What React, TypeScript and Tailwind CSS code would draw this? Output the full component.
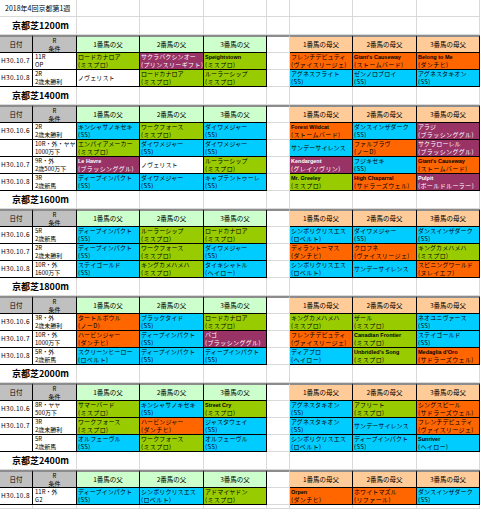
import React from 'react';

// cell colour keys: L lime, C cyan, O orange, P purple, W white
type Horse = { n: string; s?: string; c: 'L' | 'C' | 'O' | 'P' | 'W' };
type Race = { d: string; r1: string; r2: string; h: Horse[] };
type Section = { title: string; races: Race[] };

const bg: Record<Horse['c'], string> = {
  L: 'bg-[#99cc00] text-black',
  C: 'bg-[#00ccff] text-black',
  O: 'bg-[#ff6600] text-black',
  P: 'bg-[#993366] text-white',
  W: 'bg-white text-black',
};

const h = (n: string, s: string | undefined, c: Horse['c']): Horse => ({ n, s, c });

const sections: Section[] = [
  {
    title: '京都芝1200m',
    races: [
      {
        d: 'H30.10.7', r1: '11R', r2: 'OP',
        h: [
          h('ロードカナロア', '(ミスプロ)', 'L'),
          h('サクラバクシンオー', '(プリンスリーギフト)', 'P'),
          h('Speightstown', '(ミスプロ)', 'L'),
          h('フレンチデピュティ', '(ヴァイスリージェ)', 'O'),
          h("Giant's Causeway", '(ストームバード)', 'O'),
          h('Belong to Me', '(ダンチヒ)', 'O'),
        ],
      },
      {
        d: 'H30.10.8', r1: '2R', r2: '2歳未勝利',
        h: [
          h('ノヴェリスト', undefined, 'W'),
          h('ロードカナロア', '(ミスプロ)', 'L'),
          h('ルーラーシップ', '(ミスプロ)', 'L'),
          h('アグネスフライト', '(SS)', 'C'),
          h('ゼンノロブロイ', '(SS)', 'C'),
          h('アグネスタキオン', '(SS)', 'C'),
        ],
      },
    ],
  },
  {
    title: '京都芝1400m',
    races: [
      {
        d: 'H30.10.6', r1: '2R', r2: '2歳未勝利',
        h: [
          h('キンシャサノキセキ', '(SS)', 'C'),
          h('ワークフォース', '(ミスプロ)', 'L'),
          h('ダイワメジャー', '(SS)', 'C'),
          h('Forest Wildcat', '(ストームバード)', 'O'),
          h('ダンスインザダーク', '(SS)', 'C'),
          h('アラジ', '(ブラッシンググル)', 'P'),
        ],
      },
      {
        d: '', r1: '10R・外・ヤヤ', r2: '1000万下',
        h: [
          h('エンパイアメーカー', '(ミスプロ)', 'L'),
          h('ダイワメジャー', '(SS)', 'C'),
          h('ダイワメジャー', '(SS)', 'C'),
          h('サンデーサイレンス', undefined, 'C'),
          h('ファルブラヴ', '(ノーD)', 'O'),
          h('サクラローレル', '(ブラッシンググル)', 'P'),
        ],
      },
      {
        d: 'H30.10.7', r1: '9R・外', r2: '2歳500万下',
        h: [
          h('Le Havre', '(ブラッシンググル)', 'P'),
          h('ノヴェリスト', undefined, 'W'),
          h('ルーラーシップ', '(ミスプロ)', 'L'),
          h('Kendargent', '(グレイソヴリン)', 'P'),
          h('フジキセキ', '(SS)', 'C'),
          h("Giant's Causeway", '(ストームバード)', 'O'),
        ],
      },
      {
        d: 'H30.10.8', r1: '3R', r2: '2歳新馬',
        h: [
          h('ディープインパクト', '(SS)', 'C'),
          h('ダイワメジャー', '(SS)', 'C'),
          h('キャプテントゥーレ', '(SS)', 'C'),
          h('Mr. Greeley', '(ミスプロ)', 'L'),
          h('High Chaparral', '(サドラーズウェル)', 'O'),
          h('Pulpit', '(ボールドルーラー)', 'P'),
        ],
      },
    ],
  },
  {
    title: '京都芝1600m',
    races: [
      {
        d: 'H30.10.6', r1: '5R', r2: '2歳新馬',
        h: [
          h('ディープインパクト', '(SS)', 'C'),
          h('ルーラーシップ', '(ミスプロ)', 'L'),
          h('ロードカナロア', '(ミスプロ)', 'L'),
          h('シンボリクリスエス', '(ロベルト)', 'C'),
          h('ダイワメジャー', '(SS)', 'C'),
          h('ダンスインザダーク', '(SS)', 'C'),
        ],
      },
      {
        d: 'H30.10.7', r1: '2R', r2: '2歳未勝利',
        h: [
          h('ディープインパクト', '(SS)', 'C'),
          h('ワークフォース', '(ミスプロ)', 'L'),
          h('ダイワメジャー', '(SS)', 'C'),
          h('ディラントーマス', '(ダンチヒ)', 'O'),
          h('クロフネ', '(ヴァイスリージェ)', 'O'),
          h('キングカメハメハ', '(ミスプロ)', 'L'),
        ],
      },
      {
        d: 'H30.10.8', r1: '10R・外', r2: '1600万下',
        h: [
          h('ステイゴールド', '(SS)', 'C'),
          h('キングカメハメハ', '(ミスプロ)', 'L'),
          h('タイキシャトル', '(ヘイロー)', 'C'),
          h('シンボリクリスエス', '(ロベルト)', 'C'),
          h('サンデーサイレンス', undefined, 'C'),
          h('スピニングワールド', '(ヌレイエフ)', 'O'),
        ],
      },
    ],
  },
  {
    title: '京都芝1800m',
    races: [
      {
        d: 'H30.10.6', r1: '3R・外', r2: '2歳未勝利',
        h: [
          h('タートルボウル', '(ノーD)', 'O'),
          h('ブラックタイド', '(SS)', 'C'),
          h('ロードカナロア', '(ミスプロ)', 'L'),
          h('キングカメハメハ', '(ミスプロ)', 'L'),
          h('ザール', '(ミスプロ)', 'L'),
          h('ネオユニヴァース', '(SS)', 'C'),
        ],
      },
      {
        d: 'H30.10.7', r1: '10R・外', r2: '1000万下',
        h: [
          h('ハービンジャー', '(ダンチヒ)', 'O'),
          h('ディープインパクト', '(SS)', 'C'),
          h('バゴ', '(ブラッシンググル)', 'P'),
          h('フレンチデピュティ', '(ヴァイスリージェ)', 'O'),
          h('Canadian Frontier', '(ミスプロ)', 'L'),
          h('ステイゴールド', '(SS)', 'C'),
        ],
      },
      {
        d: 'H30.10.8', r1: '5R・外', r2: '2歳新馬',
        h: [
          h('スクリーンヒーロー', '(ロベルト)', 'C'),
          h('ディープインパクト', '(SS)', 'C'),
          h('ディープインパクト', '(SS)', 'C'),
          h('ディアブロ', '(ヘイロー)', 'C'),
          h("Unbridled's Song", '(ミスプロ)', 'L'),
          h("Medaglia d'Oro", '(サドラーズウェル)', 'O'),
        ],
      },
    ],
  },
  {
    title: '京都芝2000m',
    races: [
      {
        d: 'H30.10.6', r1: '8R・ヤヤ', r2: '500万下',
        h: [
          h('サマーバード', '(ミスプロ)', 'L'),
          h('キンシャサノキセキ', '(SS)', 'C'),
          h('Street Cry', '(ミスプロ)', 'L'),
          h('アグネスタキオン', '(SS)', 'C'),
          h('アフリート', '(ミスプロ)', 'L'),
          h('シングスピール', '(サドラーズウェル)', 'O'),
        ],
      },
      {
        d: 'H30.10.7', r1: '3R', r2: '2歳未勝利',
        h: [
          h('ワークフォース', '(ミスプロ)', 'L'),
          h('ハービンジャー', '(ダンチヒ)', 'O'),
          h('ジャスタウェイ', '(SS)', 'C'),
          h('アグネスタキオン', '(SS)', 'C'),
          h('サンデーサイレンス', undefined, 'C'),
          h('フレンチデピュティ', '(ヴァイスリージェ)', 'O'),
        ],
      },
      {
        d: '', r1: '5R', r2: '2歳新馬',
        h: [
          h('オルフェーヴル', '(SS)', 'C'),
          h('ワークフォース', '(ミスプロ)', 'L'),
          h('オルフェーヴル', '(SS)', 'C'),
          h('シンボリクリスエス', '(ロベルト)', 'C'),
          h('ディープインパクト', '(SS)', 'C'),
          h('Sunriver', '(ヘイロー)', 'C'),
        ],
      },
    ],
  },
  {
    title: '京都芝2400m',
    races: [
      {
        d: 'H30.10.8', r1: '11R・外', r2: 'G2',
        h: [
          h('ディープインパクト', '(SS)', 'C'),
          h('シンボリクリスエス', '(ロベルト)', 'C'),
          h('アドマイヤドン', '(ミスプロ)', 'L'),
          h('Orpen', '(ダンチヒ)', 'O'),
          h('ホワイトマズル', '(リファール)', 'O'),
          h('ダンスインザダーク', '(SS)', 'C'),
        ],
      },
    ],
  },
];

const cols = 'grid grid-cols-[33px_44px_63px_64px_63px_23px_63px_64px_63px]';
const grid = 'border-r border-b border-[#d9d9d9]';
const line = 'border-r border-b border-black';

function HorseCell({ x }: { x: Horse }) {
  const latin = /^[A-Za-z]/.test(x.n);
  return (
    <div className={`${line} ${bg[x.c]} overflow-hidden whitespace-nowrap pl-[1px] flex flex-col ${x.s ? '' : 'justify-center'}`}>
      <div className={latin ? "text-[5.5px] leading-[8px] font-bold font-['Liberation_Sans']" : 'text-[6px] leading-[8px] tracking-[0.1px]'}>{x.n}</div>
      {x.s && <div className="text-[6px] leading-[8px] tracking-[0.4px]">{x.s}</div>}
    </div>
  );
}

function EmptyCells({ n }: { n: number }) {
  return (
    <>
      {Array.from({ length: n }).map((_, i) => (
        <div key={i} className={grid} />
      ))}
    </>
  );
}

function Header() {
  const top = 'border-t-2 border-t-[#8c8c8c]';
  const fathers = ['1番馬の父', '2番馬の父', '3番馬の父'];
  const mothers = ['1番馬の母父', '2番馬の母父', '3番馬の母父'];
  return (
    <div className={`${cols} h-[18px] text-[6.5px]`}>
      <div className={`${line} ${top} bg-[#c0c0c0] flex items-center justify-center`}>日付</div>
      <div className={`${line} ${top} bg-[#c0c0c0] flex flex-col items-center justify-start text-[6px] leading-[7.5px]`}>
        <span>R</span>
        <span>条件</span>
      </div>
      {fathers.map((t) => (
        <div key={t} className={`${line} ${top} bg-[#ccffcc] flex items-center justify-center`}>{t}</div>
      ))}
      <div className={`${grid} ${top}`} />
      {mothers.map((t) => (
        <div key={t} className={`${line} ${top} bg-[#ffcc99] flex items-center justify-center`}>{t}</div>
      ))}
    </div>
  );
}

function RaceRow({ race }: { race: Race }) {
  return (
    <div className={`${cols} h-[17px]`}>
      <div className={`${line} bg-white flex items-center pl-[1px] text-[6.5px] tracking-[0.3px]`}>{race.d}</div>
      <div className={`${line} bg-white flex flex-col pl-[2px] text-[6px] leading-[8px] whitespace-nowrap overflow-hidden`}>
        <span>{race.r1}</span>
        <span>{race.r2}</span>
      </div>
      {race.h.slice(0, 3).map((x, i) => (
        <HorseCell key={i} x={x} />
      ))}
      <div className={grid} />
      {race.h.slice(3).map((x, i) => (
        <HorseCell key={i} x={x} />
      ))}
    </div>
  );
}

export default function App() {
  return (
    <div className="w-[480px] h-[509px] overflow-hidden bg-white text-black font-['Noto_Sans_CJK_JP',sans-serif]">
      {/* title row */}
      <div className={`${cols} h-[17px]`}>
        <div className={`${grid} col-span-2 flex items-center pl-[5px] text-[7px] whitespace-nowrap`}>2018年4回京都第1週</div>
        <EmptyCells n={7} />
      </div>

      {sections.map((sec) => (
        <div key={sec.title}>
          <div className={`${cols} h-[18px]`}>
            <div className={`${grid} col-span-2 flex items-center pl-[12px] text-[9px] font-bold whitespace-nowrap`}>{sec.title}</div>
            <EmptyCells n={7} />
          </div>
          <Header />
          {sec.races.map((r, i) => (
            <RaceRow key={i} race={r} />
          ))}
        </div>
      ))}

      <div className={`${cols} h-[4px]`}>
        <EmptyCells n={9} />
      </div>
    </div>
  );
}
